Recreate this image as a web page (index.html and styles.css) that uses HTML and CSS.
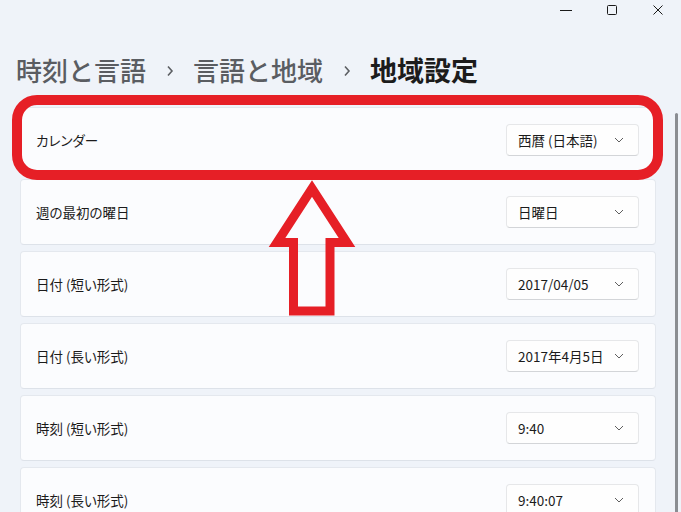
FILE: index.html
```html
<!DOCTYPE html>
<html lang="ja">
<head>
<meta charset="utf-8">
<title>地域設定</title>
<link rel="stylesheet" href="styles.css">
</head>
<body>
<div class="window">
  <div class="titlebar">
    <div class="winbtn">
      <svg width="14" height="10" viewBox="0 0 14 10"><path d="M1 5.5H13" stroke="#1a1a1a" stroke-width="1"/></svg>
    </div>
    <div class="winbtn">
      <svg width="12" height="12" viewBox="0 0 12 12"><rect x="1.5" y="1.5" width="9" height="9" rx="1" fill="none" stroke="#1a1a1a" stroke-width="1"/></svg>
    </div>
    <div class="winbtn">
      <svg width="12" height="12" viewBox="0 0 12 12"><path d="M1.5 1.5L10.5 10.5M10.5 1.5L1.5 10.5" stroke="#1a1a1a" stroke-width="1"/></svg>
    </div>
  </div>

  <h1 class="breadcrumb">
    <span class="crumb">時刻と言語</span>
    <svg class="sep" width="8" height="12" viewBox="0 0 8 12"><path d="M2 1.5L6 6L2 10.5" fill="none" stroke="#5c5f63" stroke-width="1.6"/></svg>
    <span class="crumb">言語と地域</span>
    <svg class="sep" width="8" height="12" viewBox="0 0 8 12"><path d="M2 1.5L6 6L2 10.5" fill="none" stroke="#5c5f63" stroke-width="1.6"/></svg>
    <span class="crumb current">地域設定</span>
  </h1>

  <div class="cards">
    <div class="card">
      <span class="label">カレンダー</span>
      <div class="select"><span>西暦 (日本語)</span><svg class="chev" width="10" height="6" viewBox="0 0 10 6"><path d="M1 1L5 5L9 1" fill="none" stroke="#5f5f5f" stroke-width="1"/></svg></div>
    </div>
    <div class="card">
      <span class="label">週の最初の曜日</span>
      <div class="select"><span>日曜日</span><svg class="chev" width="10" height="6" viewBox="0 0 10 6"><path d="M1 1L5 5L9 1" fill="none" stroke="#5f5f5f" stroke-width="1"/></svg></div>
    </div>
    <div class="card">
      <span class="label">日付 (短い形式)</span>
      <div class="select"><span>2017/04/05</span><svg class="chev" width="10" height="6" viewBox="0 0 10 6"><path d="M1 1L5 5L9 1" fill="none" stroke="#5f5f5f" stroke-width="1"/></svg></div>
    </div>
    <div class="card">
      <span class="label">日付 (長い形式)</span>
      <div class="select"><span>2017年4月5日</span><svg class="chev" width="10" height="6" viewBox="0 0 10 6"><path d="M1 1L5 5L9 1" fill="none" stroke="#5f5f5f" stroke-width="1"/></svg></div>
    </div>
    <div class="card">
      <span class="label">時刻 (短い形式)</span>
      <div class="select"><span>9:40</span><svg class="chev" width="10" height="6" viewBox="0 0 10 6"><path d="M1 1L5 5L9 1" fill="none" stroke="#5f5f5f" stroke-width="1"/></svg></div>
    </div>
    <div class="card">
      <span class="label">時刻 (長い形式)</span>
      <div class="select"><span>9:40:07</span><svg class="chev" width="10" height="6" viewBox="0 0 10 6"><path d="M1 1L5 5L9 1" fill="none" stroke="#5f5f5f" stroke-width="1"/></svg></div>
    </div>
  </div>

  <div class="scrollthumb"></div>

  <svg class="annotation" width="681" height="512" viewBox="0 0 681 512">
    <rect x="17" y="100" width="641" height="75" rx="20" ry="20" fill="none" stroke="#e61f26" stroke-width="10"/>
    <polygon points="312,188.5 347,242.5 330,242.5 330,311 293.5,311 293.5,242.5 277,242.5" fill="none" stroke="#e61f26" stroke-width="9" stroke-linejoin="miter" stroke-miterlimit="10"/>
  </svg>
</div>
</body>
</html>
```

FILE: styles.css
```css
html, body {
  margin: 0;
  padding: 0;
}

body {
  background: #eff3f9;
  font-family: "Noto Sans CJK JP", "Noto Sans", sans-serif;
  color: #1b1b1b;
  width: 681px;
  height: 512px;
  overflow: hidden;
}

.window {
  position: relative;
  width: 681px;
  height: 512px;
  overflow: hidden;
}

.titlebar {
  display: flex;
  justify-content: flex-end;
  height: 20px;
}

.winbtn {
  width: 46px;
  height: 20px;
  display: flex;
  align-items: center;
  justify-content: center;
}

.breadcrumb {
  display: flex;
  align-items: center;
  margin: 32px 0 19px 16px;
  height: 36px;
  font-size: 26px;
  font-weight: 500;
  line-height: 36px;
  color: #5a5d62;
  letter-spacing: 0;
}

.crumb.current {
  color: #1c1c1c;
  font-weight: 700;
  font-size: 27px;
}

.sep {
  margin: 2px 19px 0 20px;
}

.cards {
  display: flex;
  flex-direction: column;
  gap: 6px;
  padding: 0 25px 0 20px;
}

.card {
  height: 64px;
  display: flex;
  align-items: center;
  justify-content: space-between;
  padding: 0 16px 0 15px;
  background: #fbfcfe;
  border: 1px solid #e4e8ee;
  border-bottom-color: #dde2e9;
  border-radius: 4px;
}

.label {
  font-size: 13.5px;
  font-feature-settings: "palt";
  color: #1b1b1b;
}

.select {
  height: 30px;
  display: flex;
  align-items: center;
  justify-content: space-between;
  padding: 0 14px 0 11px;
  box-sizing: content-box;
  width: 106px;
  background: #fefefe;
  border: 1px solid #e6e7e9;
  border-bottom-color: #d3d5d8;
  border-radius: 4px;
  font-size: 13.5px;
  font-feature-settings: "palt";
  color: #1b1b1b;
  white-space: nowrap;
}

.chev {
  flex: none;
}

.scrollthumb {
  position: absolute;
  left: 675px;
  top: 113px;
  width: 3px;
  height: 420px;
  border-radius: 2px;
  background: #8a8d92;
}

.annotation {
  position: absolute;
  left: 0;
  top: 0;
  pointer-events: none;
}
```
